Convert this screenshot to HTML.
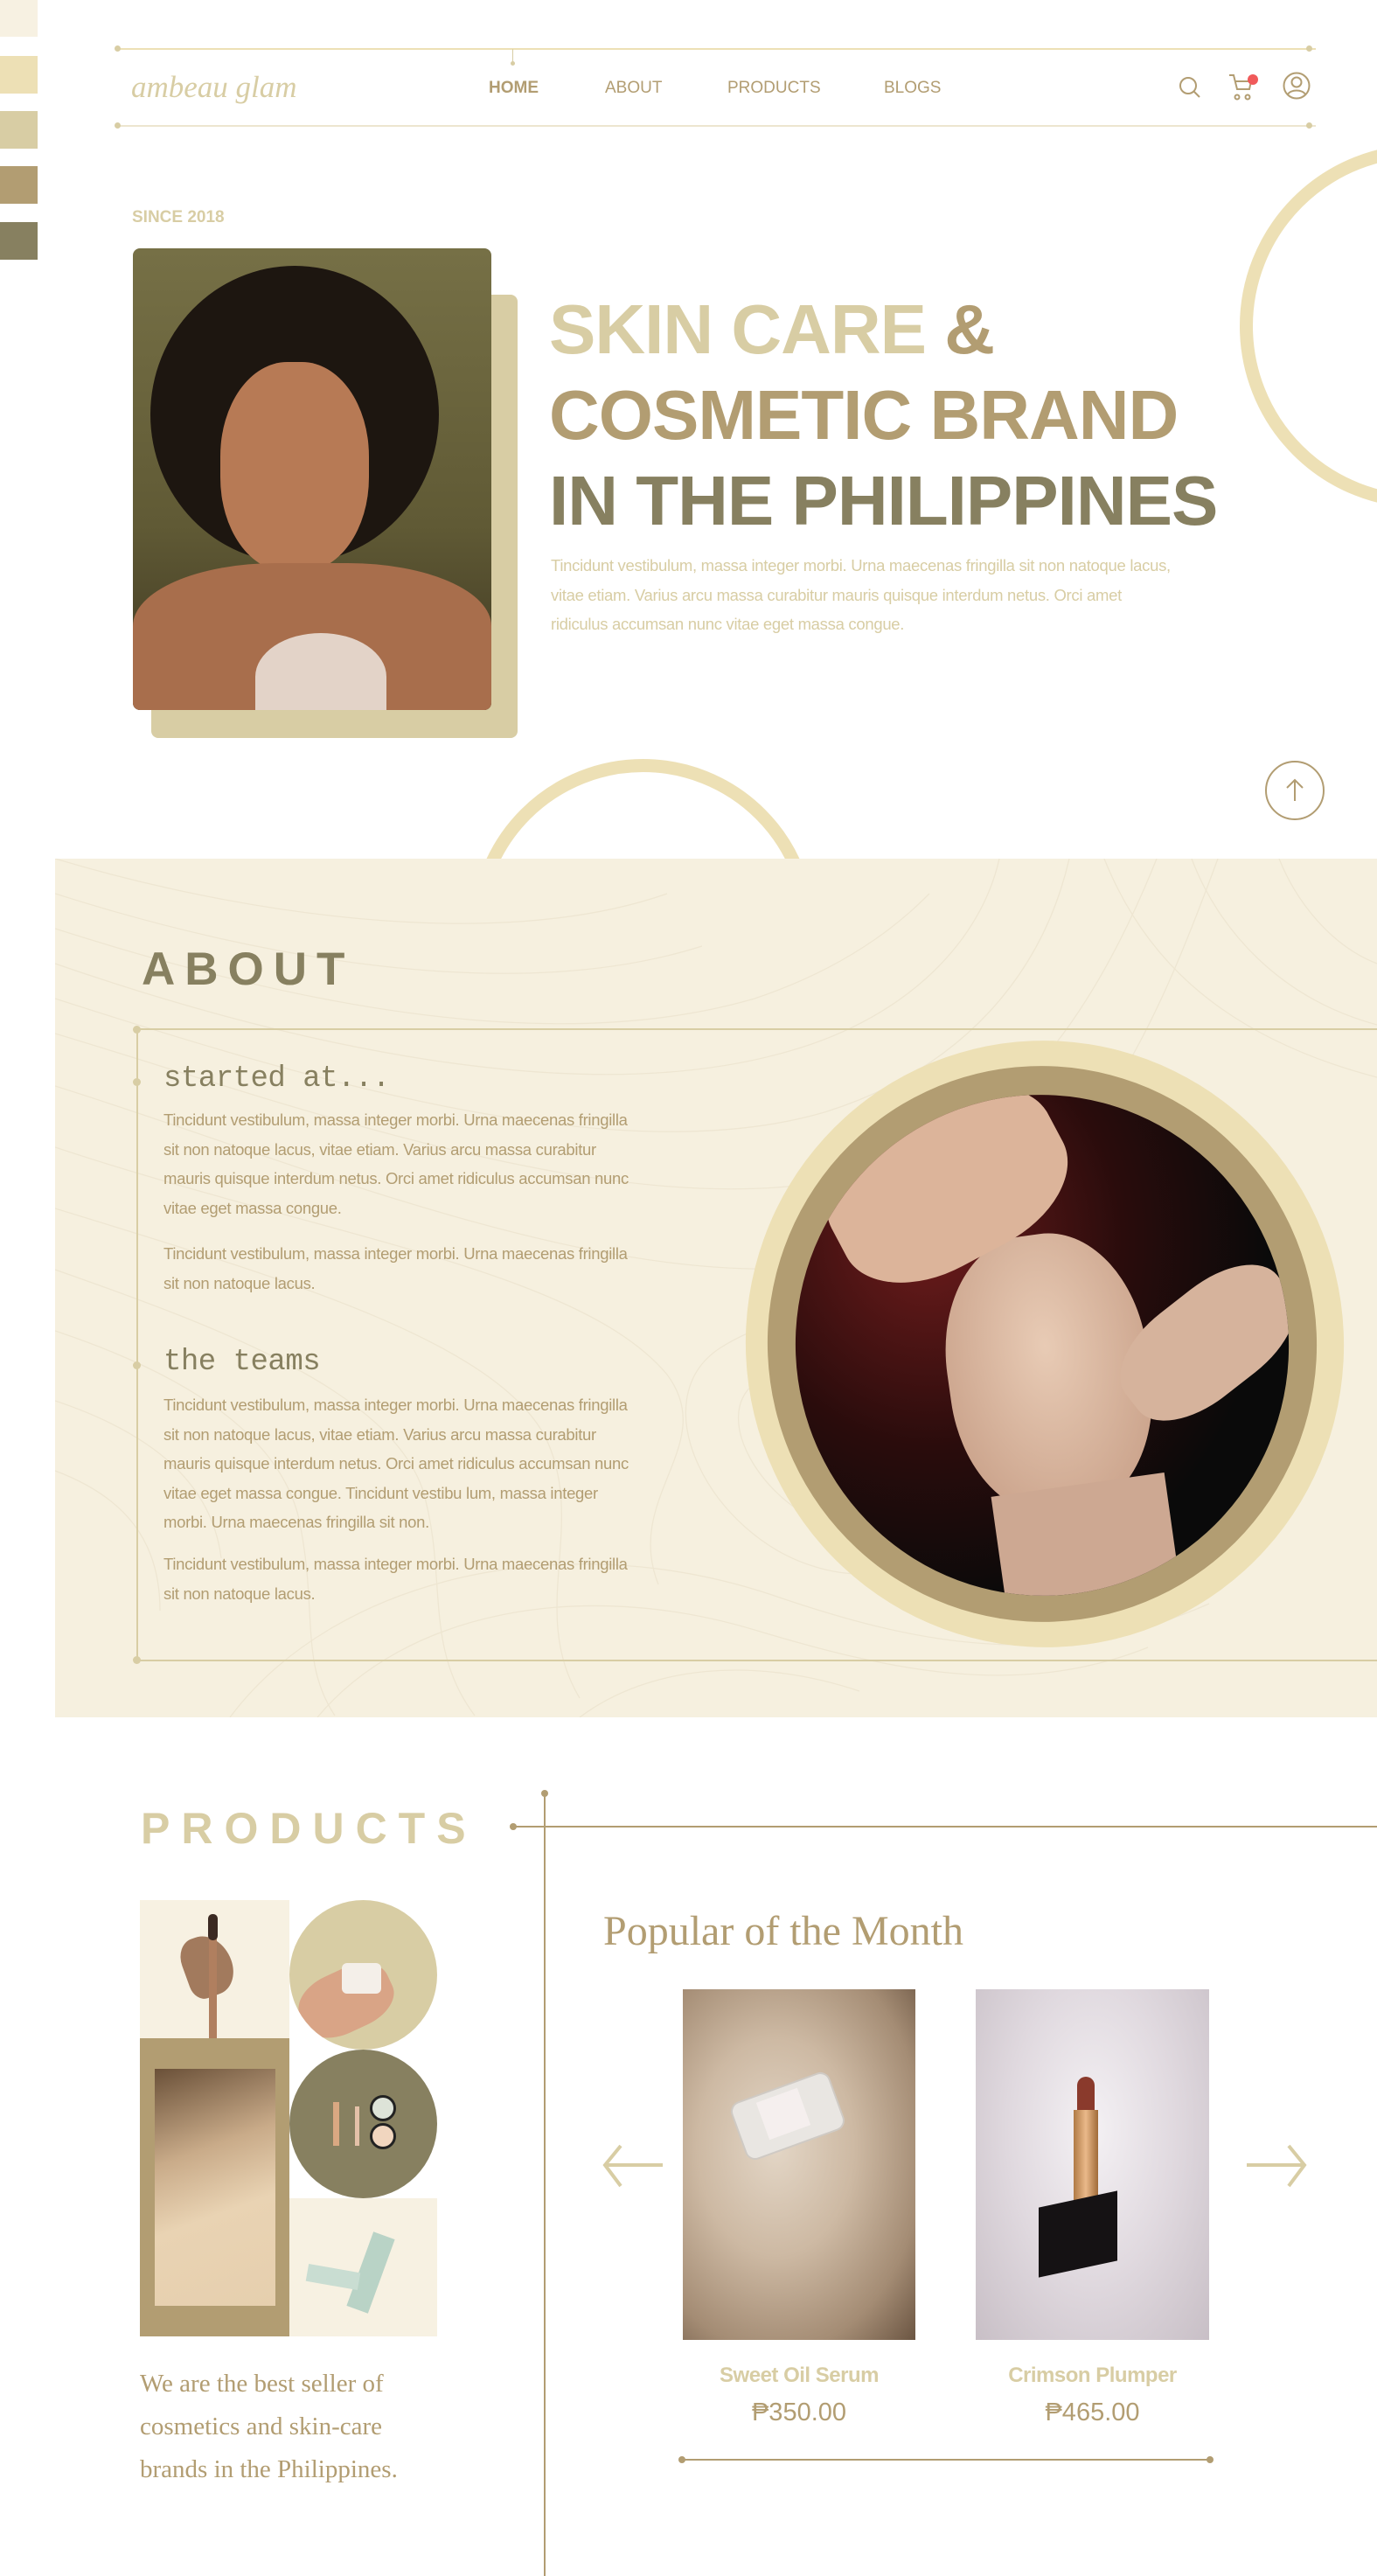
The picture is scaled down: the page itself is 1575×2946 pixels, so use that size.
<!DOCTYPE html>
<html><head><meta charset="utf-8">
<style>
*{margin:0;padding:0;box-sizing:border-box}
body{width:1575px;height:2946px;position:relative;background:#fff;overflow:hidden;font-family:"Liberation Sans",sans-serif}
.a{position:absolute}
.sw{position:absolute;left:0;width:43px;height:43px}
.nav{font-size:19px;color:#b29d72;top:90px}
.p{font-size:18.5px;line-height:33.5px;color:#b29d72;letter-spacing:-0.3px}
.mono{font-family:"Liberation Mono",monospace;color:#878060;font-size:34px;letter-spacing:-0.5px}
.dot{position:absolute;width:9px;height:9px;border-radius:50%;background:#d8cda4}
.serif{font-family:"Liberation Serif",serif}
</style></head><body>
<div class="sw" style="top:0;background:#f7f1e2;height:42px"></div>
<div class="sw" style="top:64px;background:#ede0b5"></div>
<div class="sw" style="top:127px;background:#d8cda4"></div>
<div class="sw" style="top:190px;background:#b29d72"></div>
<div class="sw" style="top:254px;background:#878060"></div>

<!-- nav -->
<div class="a" style="left:135px;top:55px;width:1370px;height:2px;background:#ede0b5"></div>
<div class="a" style="left:135px;top:143px;width:1370px;height:2px;background:#ede5cf"></div>
<div class="dot" style="left:131px;top:52px;width:7px;height:7px"></div>
<div class="dot" style="left:1494px;top:52px;width:7px;height:7px"></div>
<div class="dot" style="left:131px;top:140px;width:7px;height:7px"></div>
<div class="dot" style="left:1494px;top:140px;width:7px;height:7px"></div>
<div class="a" style="left:586px;top:56px;width:1px;height:16px;background:#d8cda4"></div>
<div class="dot" style="left:584px;top:70px;width:5px;height:5px"></div>
<div class="a serif" style="left:150px;top:80px;font-size:35px;font-style:italic;color:#d8cda4">ambeau glam</div>
<div class="a nav" style="left:559px;font-weight:bold">HOME</div>
<div class="a nav" style="left:692px">ABOUT</div>
<div class="a nav" style="left:832px">PRODUCTS</div>
<div class="a nav" style="left:1011px">BLOGS</div>
<svg class="a" style="left:1340px;top:80px" width="170" height="40" viewBox="1340 80 170 40" fill="none" stroke="#b29d72" stroke-width="2">
<circle cx="1359" cy="98" r="9"/><line x1="1365.5" y1="104.5" x2="1372" y2="111"/>
<path d="M1406 86h5l4 16h14l2-9h-19"/><circle cx="1415" cy="111" r="2.5"/><circle cx="1427" cy="111" r="2.5"/>
<circle cx="1433" cy="91" r="6" fill="#f05a5a" stroke="none"/>
<circle cx="1483" cy="98" r="14.5"/><circle cx="1483" cy="94" r="5.5"/><path d="M1473 108c3-6 17-6 20 0"/>
</svg>

<!-- hero -->
<div class="a" style="left:151px;top:238px;font-size:19px;font-weight:bold;color:#d8cda4">SINCE 2018</div>
<div class="a" style="left:173px;top:337px;width:419px;height:507px;background:#d8cda4;border-radius:8px"></div>
<div class="a" style="left:152px;top:284px;width:410px;height:528px;border-radius:8px;overflow:hidden;background:linear-gradient(180deg,#767046 0%,#605a35 60%,#3c3520 100%)">
 <div class="a" style="left:20px;top:20px;width:330px;height:340px;border-radius:50%;background:#1d1610"></div>
 <div class="a" style="left:100px;top:130px;width:170px;height:240px;border-radius:45%;background:#b77a55"></div>
 <div class="a" style="left:0;top:360px;width:410px;height:180px;border-radius:40% 40% 0 0;background:#a86e4c"></div>
 <div class="a" style="left:140px;top:440px;width:150px;height:100px;border-radius:50% 50% 0 0;background:#e3d3c8"></div>
</div>
<div class="a" style="left:628px;top:328px;font-size:80px;font-weight:bold;line-height:98px;letter-spacing:-1px;white-space:nowrap">
<div><span style="color:#d8cda4">SKIN CARE</span> <span style="color:#b29d72">&amp;</span></div>
<div style="color:#b29d72">COSMETIC BRAND</div>
<div style="color:#878060">IN THE PHILIPPINES</div>
</div>
<div class="a p" style="left:630px;top:630px;width:720px;color:#d8cda4">Tincidunt vestibulum, massa integer morbi. Urna maecenas fringilla sit non natoque lacus, vitae etiam. Varius arcu massa curabitur mauris quisque interdum netus. Orci amet ridiculus accumsan nunc vitae eget massa congue.</div>
<div class="a" style="left:1418px;top:165px;width:416px;height:416px;border-radius:50%;border:15px solid #ede0b5"></div>
<div class="a" style="left:1447px;top:870px;width:68px;height:68px;border-radius:50%;border:2px solid #b29d72"></div>
<svg class="a" style="left:1447px;top:870px" width="68" height="68" fill="none" stroke="#b29d72" stroke-width="2"><path d="M34 46V22M25 31l9-9 9 9"/></svg>
<div class="a" style="left:530px;top:868px;width:410px;height:114px;overflow:hidden"><div style="width:395px;height:395px;margin-left:8px;border-radius:50%;border:15px solid #ede0b5"></div></div>

<!-- about -->
<div class="a" style="left:63px;top:982px;width:1512px;height:982px;background:#f6f0df;overflow:hidden">
<svg width="1512" height="982" fill="none" stroke="#eee6d2" stroke-width="1.3">
<path d="M0 0c200 60 500 110 700 40M0 40c220 70 520 130 740 60M0 80c250 80 560 150 800 80 120-40 180-100 200-120M0 120c260 90 600 170 840 100 140-40 220-130 240-220"/>
<path d="M0 160c280 90 640 200 880 130 160-50 250-160 280-290M0 200c300 90 700 240 960 150 150-50 240-200 300-350M0 260c320 100 720 280 1000 180 180-60 260-250 330-440"/>
<path d="M0 330c300 100 600 140 700 260 60 80-50 140-10 240M0 400c260 80 500 150 560 260 50 100-20 200 40 300M0 470c200 70 380 140 420 250 30 100 0 180 60 260"/>
<path d="M0 540c150 50 260 120 280 220 20 100 0 160 40 220M0 620c120 40 180 100 190 180M0 700c80 30 120 80 120 160"/>
<path d="M1160 400c60-60 160-40 180 40 20 80-120 100-180-40zM1100 420c80-120 260-80 280 60 20 140-220 160-280-60zM1040 440c100-180 380-140 400 60 20 200-340 240-400-60z"/>
<path d="M1200 0c40 100 120 200 312 250M1300 0c30 80 100 160 212 190M1400 0c20 50 60 100 112 120"/>
<path d="M300 982c100-120 300-160 500-100 150 45 300 80 450 20M200 982c120-160 380-220 620-140 160 55 320 90 500 10M600 982c80-60 200-70 320-30"/>
<path d="M800 600c80-40 160-20 200 40 40 70-40 150-120 120-70-25-130-120-80-160zM760 560c110-70 260-40 310 60 50 110-70 230-200 190-120-35-200-190-110-250z"/>
</svg>
</div>
<div class="a" style="left:162px;top:1078px;font-size:53px;font-weight:bold;color:#878060;letter-spacing:11px">ABOUT</div>
<div class="a" style="left:160px;top:1176px;width:1415px;height:2px;background:#d8cda4"></div>
<div class="a" style="left:156px;top:1177px;width:2px;height:722px;background:#d8cda4"></div>
<div class="a" style="left:156px;top:1898px;width:1419px;height:2px;background:#d8cda4"></div>
<div class="dot" style="left:152px;top:1173px"></div>
<div class="dot" style="left:152px;top:1233px"></div>
<div class="dot" style="left:152px;top:1557px"></div>
<div class="dot" style="left:152px;top:1894px"></div>
<div class="a mono" style="left:187px;top:1215px">started at...</div>
<div class="a p" style="left:187px;top:1264px;width:545px">Tincidunt vestibulum, massa integer morbi. Urna maecenas fringilla sit non natoque lacus, vitae etiam. Varius arcu massa curabitur mauris quisque interdum netus. Orci amet ridiculus accumsan nunc vitae eget massa congue.</div>
<div class="a p" style="left:187px;top:1417px;width:545px">Tincidunt vestibulum, massa integer morbi. Urna maecenas fringilla sit non natoque lacus.</div>
<div class="a mono" style="left:187px;top:1539px">the teams</div>
<div class="a p" style="left:187px;top:1590px;width:545px">Tincidunt vestibulum, massa integer morbi. Urna maecenas fringilla sit non natoque lacus, vitae etiam. Varius arcu massa curabitur mauris quisque interdum netus. Orci amet ridiculus accumsan nunc vitae eget massa congue. Tincidunt vestibu lum, massa integer morbi. Urna maecenas fringilla sit non.</div>
<div class="a p" style="left:187px;top:1772px;width:545px">Tincidunt vestibulum, massa integer morbi. Urna maecenas fringilla sit non natoque lacus.</div>
<div class="a" style="left:853px;top:1190px;width:684px;height:694px;border-radius:50%;background:#ede0b5;transform:rotate(-8deg)"></div>
<div class="a" style="left:878px;top:1219px;width:628px;height:636px;border-radius:50%;background:#b29d72;transform:rotate(-8deg)"></div>
<div class="a" style="left:910px;top:1252px;width:564px;height:573px;border-radius:50%;overflow:hidden;transform:rotate(-8deg);background:radial-gradient(ellipse at 30% 25%,#6e1c1c 0%,#2a0c0c 40%,#0a0a0a 70%)">
 <div class="a" style="left:170px;top:160px;width:230px;height:320px;border-radius:45%;background:radial-gradient(ellipse at 50% 40%,#e8cbb5,#c49a82)"></div>
 <div class="a" style="left:60px;top:0;width:280px;height:180px;border-radius:40%;background:#dcb49a;transform:rotate(-20deg)"></div>
 <div class="a" style="left:360px;top:250px;width:220px;height:120px;border-radius:40%;background:#d6b39c;transform:rotate(-30deg)"></div>
 <div class="a" style="left:200px;top:450px;width:200px;height:160px;background:#cda892"></div>
</div>

<!-- products -->
<div class="a" style="left:161px;top:2062px;font-size:50px;font-weight:bold;color:#d8cda4;letter-spacing:13px">PRODUCTS</div>
<div class="a" style="left:622px;top:2051px;width:2px;height:895px;background:#b29d72"></div>
<div class="a" style="left:587px;top:2088px;width:988px;height:2px;background:#b29d72"></div>
<div class="dot" style="left:619px;top:2047px;background:#b29d72;width:8px;height:8px"></div>
<div class="dot" style="left:583px;top:2085px;background:#b29d72;width:8px;height:8px"></div>

<div class="a" style="left:160px;top:2173px;width:171px;height:158px;background:#f7f1e2;overflow:hidden">
 <div class="a" style="left:50px;top:40px;width:55px;height:70px;border-radius:40% 60% 50% 30%;background:#a27a5d;transform:rotate(-20deg)"></div>
 <div class="a" style="left:79px;top:20px;width:9px;height:140px;background:#b07f5f"></div>
 <div class="a" style="left:78px;top:16px;width:11px;height:30px;border-radius:5px;background:#3b2a22"></div>
</div>
<div class="a" style="left:331px;top:2173px;width:169px;height:171px;border-radius:50%;background:#d8cda4;overflow:hidden">
 <div class="a" style="left:10px;top:80px;width:110px;height:70px;border-radius:40%;background:#d9a486;transform:rotate(-25deg)"></div>
 <div class="a" style="left:60px;top:72px;width:45px;height:35px;border-radius:6px;background:#f4efe9"></div>
</div>
<div class="a" style="left:331px;top:2344px;width:169px;height:170px;border-radius:50%;background:#878060">
 <div class="a" style="left:50px;top:60px;width:7px;height:50px;background:#d9a882"></div>
 <div class="a" style="left:75px;top:65px;width:5px;height:45px;background:#e4c1a8"></div>
 <div class="a" style="left:92px;top:52px;width:30px;height:30px;border-radius:50%;background:#dde3d8;border:3px solid #222"></div>
 <div class="a" style="left:92px;top:84px;width:30px;height:30px;border-radius:50%;background:#f1d6bf;border:3px solid #222"></div>
</div>
<div class="a" style="left:160px;top:2331px;width:171px;height:341px;background:#b29d72"></div>
<div class="a" style="left:177px;top:2366px;width:138px;height:271px;background:linear-gradient(160deg,#6a5038 0%,#c9ab89 35%,#e9d3b3 60%,#e6cfae 100%)"></div>
<div class="a" style="left:331px;top:2514px;width:169px;height:158px;background:#f7f1e2">
 <div class="a" style="left:80px;top:40px;width:26px;height:90px;background:#b9d3c6;transform:rotate(20deg)"></div>
 <div class="a" style="left:20px;top:80px;width:60px;height:20px;background:#c9ddd2;transform:rotate(10deg)"></div>
</div>
<div class="a serif" style="left:160px;top:2702px;font-size:29px;line-height:49px;color:#b29d72;width:350px">We are the best seller of cosmetics and skin-care brands in the Philippines.</div>

<div class="a serif" style="left:690px;top:2181px;font-size:48px;color:#b29d72">Popular of the Month</div>
<div class="a" style="left:781px;top:2275px;width:266px;height:401px;background:radial-gradient(ellipse at 40% 45%,#e3d6c6 0%,#cdb9a3 40%,#a48c74 75%,#6b5542 100%)">
 <div class="a" style="left:60px;top:110px;width:120px;height:70px;border-radius:12px;background:#e9e6e2;transform:rotate(-20deg);border:2px solid #cfcac4"></div>
 <div class="a" style="left:90px;top:120px;width:50px;height:45px;background:#f5efee;transform:rotate(-20deg)"></div>
</div>
<div class="a" style="left:1116px;top:2275px;width:267px;height:401px;background:radial-gradient(ellipse at 50% 40%,#f4f1f4 0%,#e0d9df 50%,#c8bfc6 100%)">
 <div class="a" style="left:116px;top:100px;width:20px;height:40px;border-radius:10px 10px 0 0;background:#8a3a2c"></div>
 <div class="a" style="left:112px;top:138px;width:28px;height:110px;background:linear-gradient(90deg,#b07a45,#eab98a,#a06a38)"></div>
 <div class="a" style="left:72px;top:240px;width:90px;height:80px;background:#151214;transform:skewY(-12deg)"></div>
</div>
<svg class="a" style="left:688px;top:2450px" width="72" height="54" fill="none" stroke="#d8cda4" stroke-width="4"><path d="M70 26H4M22 4L4 26l18 24"/></svg>
<svg class="a" style="left:1424px;top:2450px" width="72" height="54" fill="none" stroke="#d8cda4" stroke-width="4"><path d="M2 26h66M50 4l18 22-18 24"/></svg>
<div class="a" style="left:781px;top:2703px;width:266px;text-align:center;font-size:24px;font-weight:bold;color:#d8cda4;letter-spacing:-0.5px">Sweet Oil Serum</div>
<div class="a" style="left:1116px;top:2703px;width:267px;text-align:center;font-size:24px;font-weight:bold;color:#d8cda4;letter-spacing:-0.5px">Crimson Plumper</div>
<div class="a" style="left:781px;top:2743px;width:266px;text-align:center;font-size:29px;color:#b29d72">₱350.00</div>
<div class="a" style="left:1116px;top:2743px;width:267px;text-align:center;font-size:29px;color:#b29d72">₱465.00</div>
<div class="a" style="left:780px;top:2812px;width:604px;height:2px;background:#b29d72"></div>
<div class="dot" style="left:776px;top:2809px;background:#b29d72;width:8px;height:8px"></div>
<div class="dot" style="left:1380px;top:2809px;background:#b29d72;width:8px;height:8px"></div>
</body></html>
